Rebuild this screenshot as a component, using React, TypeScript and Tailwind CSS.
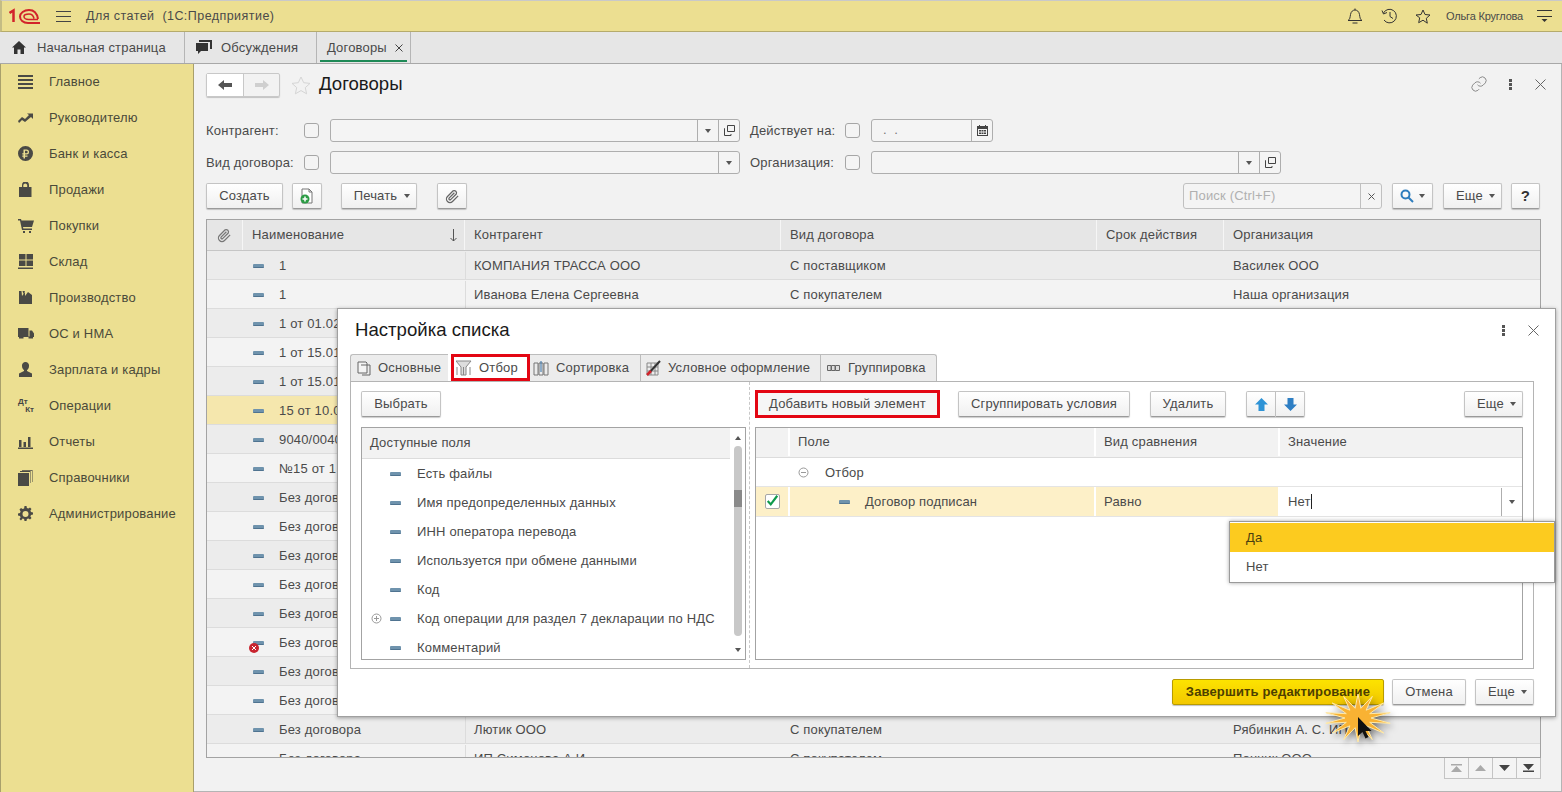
import { ReactNode } from 'react';

const GRID = 'grid grid-cols-[36px_222px_316px_316px_127px_315px]';

const sidebarItems: [string, ReactNode][] = [
  ['Главное', <path d="M0 1h15v2H0zM0 5h15v2H0zM0 9h15v2H0zM0 13h15v2H0z" />],
  ['Руководителю', <path d="M0 11l4-4 3 2 4-4-2-1.500h6V9l-2-2-6 5-3-2-3 3z" />],
  ['Банк и касса', <path fillRule="evenodd" d="M7.500 0a7.500 7.500 0 1 0 0 15 7.500 7.500 0 0 0 0-15zM5.500 3.500h3a2.500 2.500 0 0 1 0 5h-1.500v1h2.500v1.200H7v1.800H5.500v-1.800H4.300v-1.200h1.200v-1H4.300V7.200h1.200zM7 4.800v2.400h1.500a1.200 1.200 0 0 0 0-2.400z" />],
  ['Продажи', <path fillRule="evenodd" d="M1 5h3V3a3.500 3.500 0 0 1 7 0v2h2.500v10H1zM5.300 5h3.900V3a2 2 0 0 0-3.900 0z" />],
  ['Покупки', <path d="M0 1h3l.5 1.500H16L14 9H5l.3 1.500H14V12H4L2 2.500H0z M5 13h2v2H5z M11 13h2v2h-2z" />],
  ['Склад', <path d="M1 0h6.500v5.500H1zM8.500 0H15v5.500H8.500zM1 6.500h6.500v5.500H1zM8.500 6.500H15v5.500H8.500zM0 13.500h15V15H0z" />],
  ['Производство', <path d="M1 1h2.500l.5 5 3-4v4l3-4 4 3v9H1zM4.500 1H7L5.500 4z" />],
  ['ОС и НМА', <path d="M0 2h10.500v9H0zM11.500 4.500H14l2 3V11h-4.500zM1 10.500h4.500v2H1zM10.500 10.500h4.500v2h-4.500z" />],
  ['Зарплата и кадры', <path d="M7.500 0a3.500 3.500 0 0 1 3.500 4c0 2-1 3.500-2 4v1l5 2.500V15H1v-3.500L6 9V8C5 7.500 4 6 4 4a3.500 3.500 0 0 1 3.500-4z" />],
  ['Операции', <></>],
  ['Отчеты', <path d="M1 6h2.500v7H1zM5.500 8H8v5H5.500zM10 3h2.500v10H10zM0 13.500h15V15H0z" />],
  ['Справочники', <path d="M0 3h11v13H0zM2 1h10.500v12H12V2H2zM4 0h10.500v12H14V.800H4z" />],
  ['Администрирование', <path fillRule="evenodd" d="M6.500 0h2l.4 2 1.500.6L12 1.500l1.500 1.500-1.100 1.600.6 1.500 2 .4v2l-2 .4-.6 1.500 1.100 1.600-1.500 1.500-1.600-1.100-1.500.6-.4 2h-2l-.4-2-1.500-.6L3 14.500 1.500 13l1.100-1.600L2 9.900l-2-.4v-2l2-.4.6-1.500L1.500 3.500 3 2l1.600 1.100 1.500-.6zM7.500 5a3 3 0 1 0 0 6 3 3 0 0 0 0-6z" />],
];

// rows of the list behind the dialog
const rows = [
  ['1', 'КОМПАНИЯ ТРАССА ООО', 'С поставщиком', 'Василек ООО'],
  ['1', 'Иванова Елена Сергеевна', 'С покупателем', 'Наша организация'],
  ['1 от 01.02', '', '', ''],
  ['1 от 15.01', '', '', ''],
  ['1 от 15.01', '', '', ''],
  ['15 от 10.0', '', '', ''],
  ['9040/0040', '', '', ''],
  ['№15 от 1', '', '', ''],
  ['Без догов', '', '', ''],
  ['Без догов', '', '', ''],
  ['Без догов', '', '', ''],
  ['Без догов', '', '', ''],
  ['Без догов', '', '', ''],
  ['Без догов', '', '', ''],
  ['Без догов', '', '', ''],
  ['Без догов', '', '', ''],
  ['Без договора', 'Лютик ООО', 'С покупателем', 'Рябинкин А. С. ИП'],
  ['Без договора', 'ИП Симонова А И', 'С покупателем', 'Пончик ООО'],
];

const fields = [
  'Есть файлы',
  'Имя предопределенных данных',
  'ИНН оператора перевода',
  'Используется при обмене данными',
  'Код',
  'Код операции для раздел 7 декларации по НДС',
  'Комментарий',
];

// 14 point burst behind the mouse cursor
const burst = Array.from({ length: 28 }, (_, i) => {
  const a = (i / 28) * Math.PI * 2 - Math.PI / 2;
  const rx = i % 2 === 0 ? 33 : 13;
  const ry = i % 2 === 0 ? 24 : 10;
  return `${(34 + rx * Math.cos(a)).toFixed(1)},${(25 + ry * Math.sin(a)).toFixed(1)}`;
}).join(' ');

function Dash() {
  return <span className="block h-[4px] w-[11px] shrink-0 rounded-[1px] bg-[#6f93ad] border-b border-[#4f7390]" />;
}

function Caret({ className = '' }: { className?: string }) {
  return <span className={`inline-block w-0 h-0 border-x-[3px] border-x-transparent border-t-[4px] border-t-[#555] ${className}`} />;
}

function Btn({ children, className = '' }: { children: ReactNode; className?: string }) {
  return (
    <div className={`flex h-[26px] items-center justify-center rounded-[2px] border border-[#c4c4c4] border-b-[#9a9a9a] bg-gradient-to-b from-white to-[#f0f0f0] shadow-[0_1px_1px_rgba(0,0,0,0.2)] text-[#4a4a4a] ${className}`}>
      {children}
    </div>
  );
}

function Check() {
  return <span className="block h-[15px] w-[15px] shrink-0 rounded-[3px] border border-[#a6a6a6] bg-[#f4f4f4]" />;
}

function Field({ className = '', children }: { className?: string; children?: ReactNode }) {
  return <div className={`flex h-[23px] rounded-[3px] border border-[#aeaeae] bg-[#f4f4f4] ${className}`}>{children}</div>;
}

function OpenIcon() {
  return (
    <svg width="11" height="11" viewBox="0 0 11 11" fill="none" stroke="#444">
      <path d="M3.500.500h7v6h-7zM1 3.500H.500v7h6.500V9" />
    </svg>
  );
}

function Addon({ children }: { children: ReactNode }) {
  return <div className="flex w-[21px] shrink-0 items-center justify-center border-l border-[#aeaeae]">{children}</div>;
}

export default function App() {
  return (
    <div className="relative flex h-[792px] w-[1562px] flex-col overflow-hidden bg-[#f2f2f2] font-['Liberation_Sans',Arial,sans-serif] text-[13px] tracking-[0.17px] text-[#4a4a4a]">
      {/* top bar */}
      <header className="flex h-[32px] shrink-0 items-center border-b border-[#b5ab6c] border-t border-t-[#c9c9c9] border-l-2 border-l-[#c4bc84] bg-[#ecdf91] pl-[7px] pr-[10px]">
        <svg width="31" height="17" viewBox="0 0 31 17" fill="none" stroke="#d2232a" strokeWidth="2">
          <path d="M.500 5l4-2.500V14" strokeWidth="2.500" />
          <path d="M29 11C28 5 25 2 20 2c-5 0-9 3-9 6.500s3 6.500 8 6.500h12" />
          <path d="M25 10.500C24.500 8 23 6 20 6c-3 0-5 1-5 2.500s2 3 4.500 3H29" strokeWidth="1.600" />
        </svg>
        <svg className="ml-[16px]" width="15" height="11" viewBox="0 0 15 11" stroke="#444">
          <path d="M0 .500h15M0 5.500h15M0 10.500h15" />
        </svg>
        <span className="ml-[15px] text-[12.500px] tracking-[0.45px]">Для статей&nbsp; (1С:Предприятие)</span>
        <div className="ml-auto flex items-center">
          <svg width="16" height="17" viewBox="0 0 16 17" fill="none" stroke="#333">
            <path d="M1 12.500c2-1 2-3 2.500-6C4 3.500 6 2 8 2s4 1.500 4.500 4.500.5 5 2.500 6zM1 12.500h14M5.500 15h5" />
            <path d="M8 .500V2" />
          </svg>
          <svg className="ml-[18px]" width="17" height="16" viewBox="0 0 17 16" fill="none" stroke="#333">
            <path d="M2.500 5A6.800 6.800 0 1 1 3 12" />
            <path d="M1 2.500L2.500 6 6 4.500" />
            <path d="M9 4v4.500l3 2" />
          </svg>
          <svg className="ml-[17px]" width="16" height="15" viewBox="0 0 16 15" fill="none" stroke="#333">
            <path d="M8 1l2 4.500 5 .500-3.700 3.300 1 4.900L8 11.200 3.700 13.700l1-4.900L1 6l5-.500z" />
          </svg>
          <span className="ml-[15px] text-[11px] tracking-[-0.2px]">Ольга Круглова</span>
          <svg className="ml-[14px] shrink-0" width="15" height="12" viewBox="0 0 15 12" fill="#333" stroke="#333">
            <path d="M0 .500h15M0 6.500h15" />
            <path stroke="none" d="M4.500 9h6l-3 3z" />
          </svg>
        </div>
      </header>

      {/* tabs */}
      <nav className="flex h-[32px] shrink-0 border-b border-[#a8a8a8] bg-[#e6e6e6]">
        <div className="flex w-[185px] items-center border-r border-[#b5b5b5] pl-[12px]">
          <svg width="14" height="13" viewBox="0 0 14 13" fill="#333">
            <path d="M7 0l7 6.500h-2V13H8.500V8.500h-3V13H2V6.500H0z" />
          </svg>
          <span className="ml-[11px]">Начальная страница</span>
        </div>
        <div className="flex w-[132px] items-center border-r border-[#b5b5b5] pl-[10px]">
          <svg width="17" height="15" viewBox="0 0 17 15" fill="#333">
            <path d="M4 0h13v9h-2V2H4z" />
            <path d="M1 3h12v8H6l-3 3v-3H1z" />
          </svg>
          <span className="ml-[9px]">Обсуждения</span>
        </div>
        <div className="relative flex w-[94px] items-center border-r border-[#b5b5b5] pl-[10px]">
          <span>Договоры</span>
          <svg className="ml-[8px]" width="8" height="8" viewBox="0 0 8 8" stroke="#444">
            <path d="M.500.500l7 7M7.500.500l-7 7" />
          </svg>
          <span className="absolute bottom-[1px] left-[3px] right-[3px] h-[2px] bg-[#1e8a57]" />
        </div>
      </nav>

      <div className="flex min-h-0 flex-1">
        {/* sidebar */}
        <aside className="flex w-[194px] shrink-0 flex-col border-l border-r border-l-[#a9a06b] border-r-[#a9a06b] bg-[#ecdf91]">
          {sidebarItems.map(([label, icon]) => (
            <div key={label} className="flex h-[36px] items-center pl-[17px] text-[#4a4a3a]">
              {label === 'Операции' ? (
                <span className="relative block h-[16px] w-[16px] text-[8px] font-bold leading-none tracking-normal text-[#444]">
                  <span className="absolute left-0 top-0">Дт</span>
                  <span className="absolute bottom-0 right-0">Кт</span>
                </span>
              ) : (
                <svg width="16" height="16" viewBox="0 0 16 16" fill="#4a4a45">
                  {icon}
                </svg>
              )}
              <span className="ml-[15px]">{label}</span>
            </div>
          ))}
        </aside>

        {/* list form */}
        <main className="flex min-w-0 flex-1 flex-col border-b border-r border-[#b4b4b4] pl-[12px] pr-[20px]">
          <div className="flex h-[33px] shrink-0 items-end">
            <div className="flex h-[24px] w-[74px] rounded-[2px] border border-[#c8c8c8] shadow-[0_1px_1px_rgba(0,0,0,0.2)]">
              <div className="flex w-[37px] items-center justify-center border-r border-[#c8c8c8] bg-white">
                <svg width="14" height="10" viewBox="0 0 14 10" fill="#555">
                  <path d="M0 5l6-5v3h8v4H6v3z" />
                </svg>
              </div>
              <div className="flex flex-1 items-center justify-center">
                <svg width="14" height="10" viewBox="0 0 14 10" fill="#cfcfcf">
                  <path d="M14 5L8 0v3H0v4h8v3z" />
                </svg>
              </div>
            </div>
            <svg className="mb-[2px] ml-[11px]" width="20" height="19" viewBox="0 0 20 19" fill="none" stroke="#d5d5d5">
              <path d="M10 1l2.700 5.700 6.300.7-4.700 4.200 1.300 6.200-5.600-3.200-5.600 3.200 1.300-6.200L1 7.400l6.300-.7z" />
            </svg>
            <h1 className="mb-[1px] ml-[8px] text-[18.600px] font-normal leading-[24px] tracking-normal text-[#1a1a1a]">Договоры</h1>
            <div className="ml-auto mr-[-5px] mb-[4px] flex items-center">
              <svg width="18" height="18" viewBox="0 0 24 24" fill="none" stroke="#888" strokeWidth="1.300">
                <path d="M10 13a5 5 0 0 0 7.500.500l3-3a5 5 0 0 0-7-7l-1.700 1.700" />
                <path d="M14 11a5 5 0 0 0-7.500-.500l-3 3a5 5 0 0 0 7 7l1.700-1.700" />
              </svg>
              <svg className="ml-[21px]" width="3" height="11" viewBox="0 0 3 11" fill="#555">
                <path d="M0 0h3v3H0zM0 4h3v3H0zM0 8h3v3H0z" />
              </svg>
              <svg className="ml-[23px]" width="11" height="11" viewBox="0 0 11 11" stroke="#666">
                <path d="M.500.500l10 10M10.500.500l-10 10" />
              </svg>
            </div>
          </div>

          <div className="mt-[22px] flex h-[23px] shrink-0 items-center">
            <span className="w-[98px]">Контрагент:</span>
            <Check />
            <Field className="ml-[11px] w-[410px]">
              <div className="flex-1" />
              <Addon><Caret /></Addon>
              <Addon><OpenIcon /></Addon>
            </Field>
            <span className="ml-[10px] w-[95px]">Действует на:</span>
            <Check />
            <Field className="ml-[11px] w-[122px]">
              <span className="flex-1 pl-[11px] text-[#777]">. &nbsp;.</span>
              <Addon>
                <svg width="11" height="11" viewBox="0 0 11 11" fill="#444">
                  <path d="M0 1h2V0h1v1h5V0h1v1h2v10H0zM1 4v6h9V4z" />
                  <path d="M2 5h2v1.500H2zM4.500 5h2v1.500h-2zM7 5h2v1.500H7zM2 7.500h2V9H2zM4.500 7.500h2V9h-2zM7 7.500h2V9H7z" />
                </svg>
              </Addon>
            </Field>
          </div>

          <div className="mt-[9px] flex h-[23px] shrink-0 items-center">
            <span className="w-[98px]">Вид договора:</span>
            <Check />
            <Field className="ml-[11px] w-[410px]">
              <div className="flex-1" />
              <Addon><Caret /></Addon>
            </Field>
            <span className="ml-[10px] w-[95px]">Организация:</span>
            <Check />
            <Field className="ml-[11px] w-[410px]">
              <div className="flex-1" />
              <Addon><Caret /></Addon>
              <Addon><OpenIcon /></Addon>
            </Field>
          </div>

          <div className="mr-[1px] mt-[9px] flex h-[26px] shrink-0 items-center">
            <Btn className="w-[77px]">Создать</Btn>
            <Btn className="ml-[9px] w-[30px]">
              <svg width="16" height="16" viewBox="0 0 16 16">
                <path d="M3 1h7l3 3v11H3z" fill="#fff" stroke="#777" />
                <path d="M10 1v3h3" fill="none" stroke="#777" />
                <circle cx="6" cy="11" r="4.500" fill="#2c9c45" />
                <path d="M6 8.500v5M3.500 11h5" stroke="#fff" strokeWidth="1.500" />
              </svg>
            </Btn>
            <Btn className="ml-[19px] w-[76px] pl-[6px]">Печать<Caret className="ml-[7px]" /></Btn>
            <Btn className="ml-[20px] w-[30px]">
              <svg width="15" height="15" viewBox="0 0 24 24" fill="none" stroke="#666" strokeWidth="2">
                <path d="M21 11l-9 9a5.500 5.500 0 0 1-8-8l9-9a3.700 3.700 0 0 1 5 5l-9 9a1.800 1.800 0 0 1-2.500-2.500l8.500-8.500" />
              </svg>
            </Btn>
            <div className="ml-auto flex h-[26px] w-[199px] rounded-[3px] border border-[#c0c0c0] bg-[#f4f4f4]">
              <span className="flex flex-1 items-center pl-[5px] text-[#b0b0b0]">Поиск (Ctrl+F)</span>
              <div className="flex w-[21px] items-center justify-center border-l border-[#c0c0c0]">
                <svg width="7" height="7" viewBox="0 0 7 7" stroke="#555">
                  <path d="M.500.500l6 6M6.500.500l-6 6" />
                </svg>
              </div>
            </div>
            <Btn className="ml-[10px] w-[41px]">
              <svg width="14" height="14" viewBox="0 0 14 14" fill="none" stroke="#2e7dbd" strokeWidth="2">
                <circle cx="5.500" cy="5.500" r="4" />
                <path d="M8.500 8.500l4.500 4.500" />
              </svg>
              <Caret className="ml-[5px]" />
            </Btn>
            <Btn className="ml-[10px] w-[59px] pl-[6px]">Еще<Caret className="ml-[6px]" /></Btn>
            <Btn className="ml-[9px] w-[29px] font-bold text-[15px] text-[#333]">?</Btn>
          </div>

          {/* contracts table */}
          <div className="mt-[10px] h-[539px] shrink-0 overflow-hidden border border-[#a3a3a3] bg-[#f2f2f2]">
            <div className={`${GRID} h-[31px] border-b border-[#c6c6c6] bg-[#e6e6e6]`}>
              <div className="flex items-center justify-center border-r border-[#f6f6f6]">
                <svg width="15" height="15" viewBox="0 0 24 24" fill="none" stroke="#777" strokeWidth="2">
                  <path d="M21 11l-9 9a5.500 5.500 0 0 1-8-8l9-9a3.700 3.700 0 0 1 5 5l-9 9a1.800 1.800 0 0 1-2.500-2.500l8.500-8.500" />
                </svg>
              </div>
              <div className="flex items-center justify-between border-r border-[#f6f6f6] pl-[9px] pr-[7px]">
                Наименование
                <svg width="7" height="13" viewBox="0 0 7 13" fill="none" stroke="#555">
                  <path d="M3.500 0v12M.500 9l3 3 3-3" />
                </svg>
              </div>
              <div className="flex items-center border-r border-[#f6f6f6] pl-[9px]">Контрагент</div>
              <div className="flex items-center border-r border-[#f6f6f6] pl-[9px]">Вид договора</div>
              <div className="flex items-center border-r border-[#f6f6f6] pl-[9px]">Срок действия</div>
              <div className="flex items-center pl-[9px]">Организация</div>
            </div>
            {rows.map((row, i) => (
              <div
                key={i}
                className={`${GRID} h-[29px] border-b border-[#dcdcdc] pt-[1px] ${i === 5 ? 'bg-[#f5e7ad]' : i % 2 === 0 ? 'bg-[#ececec]' : 'bg-[#f3f3f3]'}`}
              >
                <div />
                <div className="relative flex items-center pl-[10px]">
                  <Dash />
                  {i === 13 && (
                    <svg className="absolute left-[6px] top-[14px]" width="10" height="10" viewBox="0 0 10 10">
                      <circle cx="5" cy="5" r="5" fill="#c8242f" />
                      <path d="M3 3l4 4M7 3l-4 4" stroke="#fff" />
                    </svg>
                  )}
                  <span className="ml-[15px] whitespace-nowrap">{row[0]}</span>
                </div>
                <div className="flex items-center border-l border-[#dcdcdc] pl-[8px]">{row[1]}</div>
                <div className="flex items-center pl-[9px]">{row[2]}</div>
                <div />
                <div className="flex items-center pl-[9px]">{row[3]}</div>
              </div>
            ))}
          </div>

          <div className="flex justify-end">
            <div className="flex h-[21px] w-[97px] border border-t-0 border-[#c4c4c4] bg-[#f4f4f4]">
              {[
                <path d="M0 0h11v1.500H0zM5.500 2L11 8H0z" fill="#aaa" />,
                <path d="M5.500 1L11 7H0z" fill="#aaa" />,
                <path d="M5.500 7L0 1h11z" fill="#444" />,
                <path d="M5.500 6L0 0h11zM0 6.500h11V8H0z" fill="#444" />,
              ].map((p, i) => (
                <div key={i} className="flex flex-1 items-center justify-center border-r border-[#c4c4c4] last:border-r-0">
                  <svg width="11" height="8" viewBox="0 0 11 8">{p}</svg>
                </div>
              ))}
            </div>
          </div>
        </main>
      </div>

      {/* dialog */}
      <section className="absolute left-[337px] top-[308px] flex h-[409px] w-[1219px] flex-col border border-[#a0a0a0] bg-white pl-[12px] shadow-[0_1px_4px_rgba(0,0,0,0.35)]">
        <div className="flex h-[45px] shrink-0 items-center pb-[3px] pl-[5px]">
          <h2 className="text-[18.600px] font-normal tracking-normal text-[#1a1a1a]">Настройка списка</h2>
          <div className="ml-auto mr-[16px] flex items-center">
            <svg width="3" height="11" viewBox="0 0 3 11" fill="#555">
              <path d="M0 0h3v3H0zM0 4h3v3H0zM0 8h3v3H0z" />
            </svg>
            <svg className="ml-[23px]" width="11" height="11" viewBox="0 0 11 11" stroke="#666">
              <path d="M.500.500l10 10M10.500.500l-10 10" />
            </svg>
          </div>
        </div>

        <div className="flex h-[27px] shrink-0 items-stretch">
          <div className="flex w-[98px] items-center rounded-tl-[3px] border border-b-0 border-r-0 border-[#bcbcbc] bg-[#ececec] pl-[6px]">
            <svg width="15" height="15" viewBox="0 0 15 15" fill="none" stroke="#666">
              <path d="M1 1h8l1 1v10H1z" fill="#f4f4f4" />
              <path d="M4 4h9v10H5" />
            </svg>
            <span className="ml-[6px]">Основные</span>
          </div>
          <div className="ml-[3px] flex w-[79px] items-center border-[3px] border-[#e30613] bg-white pl-[2px]">
            <svg width="16" height="16" viewBox="0 0 16 16" fill="none" stroke="#888">
              <path d="M0 1h15l-5 6v8H5V7z" fill="#ddd" />
              <path d="M7.500 7v8M1 7v8M14 7v8" />
            </svg>
            <span className="ml-[7px]">Отбор</span>
          </div>
          <div className="flex w-[110px] items-center border-t border-[#bcbcbc] bg-[#ececec] pl-[3px]">
            <svg width="16" height="16" viewBox="0 0 16 16" fill="none" stroke="#777">
              <path d="M1 3h4v12H1zM6 3h4v12H6zM11 3h4v12h-4z" />
              <path d="M8 1v11" stroke="#2e6da4" />
            </svg>
            <span className="ml-[7px]">Сортировка</span>
          </div>
          <div className="flex w-[181px] items-center border border-b-0 border-[#bcbcbc] bg-[#ececec] pl-[5px]">
            <svg width="16" height="16" viewBox="0 0 16 16" fill="none" stroke="#888">
              <path d="M1 3h11v12H1zM1 7h11M1 11h11M5 3v12M9 3v12" />
              <path d="M2 14L14 1" stroke="#333" strokeWidth="2" />
              <path d="M1 15l4-4" stroke="#d2232a" strokeWidth="2.500" />
            </svg>
            <span className="ml-[6px]">Условное оформление</span>
          </div>
          <div className="flex w-[116px] items-center rounded-tr-[3px] border border-b-0 border-l-0 border-[#bcbcbc] bg-[#ececec] pl-[6px]">
            <svg width="13" height="6" viewBox="0 0 13 6" fill="#ddd" stroke="#666">
              <path d="M.500.500h3.500v5H.500zM4.500.500H8v5H4.500zM8.500.500h4v5h-4z" />
            </svg>
            <span className="ml-[8px]">Группировка</span>
          </div>
        </div>

        <div className="flex h-[288px] w-[1184px] shrink-0 border border-[#b4b4b4] pl-[10px] pt-[9px]">
          {/* available fields */}
          <div className="flex w-[385px] shrink-0 flex-col">
            <Btn className="w-[80px]">Выбрать</Btn>
            <div className="mt-[10px] flex h-[233px] border border-[#a3a3a3]">
              <div className="min-w-0 flex-1 overflow-hidden">
                <div className="flex h-[31px] items-center border-b border-[#dcdcdc] bg-[#f2f2f2] pl-[8px]">Доступные поля</div>
                {fields.map((f, i) => (
                  <div key={f} className="flex h-[29px] items-center pl-[28px]">
                    {i === 5 && (
                      <svg className="ml-[-19px] mr-[8px]" width="11" height="11" viewBox="0 0 11 11" fill="none" stroke="#999">
                        <circle cx="5.500" cy="5.500" r="4.500" />
                        <path d="M3 5.500h5M5.500 3v5" />
                      </svg>
                    )}
                    <Dash />
                    <span className="ml-[16px] whitespace-nowrap">{f}</span>
                  </div>
                ))}
              </div>
              <div className="flex w-[15px] shrink-0 flex-col items-center bg-white">
                <span className="mt-[8px] h-0 w-0 border-x-[3px] border-b-[4px] border-x-transparent border-b-[#555]" />
                <span className="relative mt-[6px] h-[190px] w-[8px] rounded-[4px] bg-[#c8c8c8]">
                  <span className="absolute left-0 top-[44px] h-[17px] w-[8px] bg-[#8a8a8a]" />
                </span>
                <Caret className="mt-[12px]" />
              </div>
            </div>
          </div>

          <div className="mx-[3px] mt-[-9px] w-[1px] shrink-0 border-l border-dashed border-[#c8c8c8]" />

          {/* filter conditions */}
          <div className="ml-[2px] mt-[-1px] flex w-[768px] shrink-0 flex-col">
            <div className="flex h-[28px] shrink-0 items-center">
              <div className="flex h-[28px] w-[185px] items-center justify-center border-[3px] border-[#e30613] bg-[#f6f6f6]">Добавить новый элемент</div>
              <Btn className="ml-[18px] w-[172px]">Сгруппировать условия</Btn>
              <Btn className="ml-[20px] w-[76px]">Удалить</Btn>
              <div className="ml-[20px] flex">
                <Btn className="w-[30px] rounded-r-none">
                  <svg width="13" height="13" viewBox="0 0 13 13" fill="#2e93d6">
                    <path d="M6.500 0L13 6.500H9.500V13h-6V6.500H0z" />
                  </svg>
                </Btn>
                <Btn className="w-[29px] rounded-l-none border-l-0">
                  <svg width="13" height="13" viewBox="0 0 13 13" fill="#2e7fc4">
                    <path d="M6.500 13L13 6.500H9.500V0h-6v6.500H0z" />
                  </svg>
                </Btn>
              </div>
              <Btn className="ml-auto w-[59px] pl-[6px]">Еще<Caret className="ml-[6px]" /></Btn>
            </div>
            <div className="mt-[9px] h-[233px] border border-[#a3a3a3]">
              <div className="grid h-[30px] grid-cols-[34px_306px_184px_1fr] border-b border-[#dcdcdc] bg-[#f2f2f2] pb-[1px]">
                <div className="border-r-2 border-white" />
                <div className="flex items-center border-r-2 border-white pl-[8px]">Поле</div>
                <div className="flex items-center border-r-2 border-white pl-[8px]">Вид сравнения</div>
                <div className="flex items-center pl-[8px]">Значение</div>
              </div>
              <div className="flex h-[29px] items-center border-b border-[#e4e4e4] pl-[42px] pt-[1px]">
                <svg width="11" height="11" viewBox="0 0 11 11" fill="none" stroke="#999">
                  <circle cx="5.500" cy="5.500" r="4.500" />
                  <path d="M3 5.500h5" />
                </svg>
                <span className="ml-[16px]">Отбор</span>
              </div>
              <div className="grid h-[30px] grid-cols-[34px_306px_184px_1fr] border-b border-[#e4e4e4]">
                <div className="flex items-center justify-center border-r-2 border-white bg-[#fdf0c8]">
                  <span className="flex h-[15px] w-[15px] items-center justify-center rounded-[2px] border border-[#a6a6a6] bg-white">
                    <svg width="15" height="13" viewBox="0 0 15 13" fill="none" stroke="#0f9a4b" strokeWidth="2.500" className="mt-[-3px]">
                      <path d="M2 7l3.500 4L13 1" />
                    </svg>
                  </span>
                </div>
                <div className="flex items-center border-r-2 border-white bg-[#fdf0c8] pl-[49px]">
                  <Dash />
                  <span className="ml-[15px]">Договор подписан</span>
                </div>
                <div className="flex items-center border-r-2 border-white bg-[#fdf0c8] pl-[8px]">Равно</div>
                <div className="flex items-center bg-white pl-[8px]">
                  <span className="border-r border-[#222] pr-0 leading-[15px]">Нет</span>
                  <div className="ml-auto flex h-[28px] w-[21px] items-center justify-center border-l border-[#aeaeae]">
                    <Caret />
                  </div>
                </div>
              </div>
            </div>
          </div>
        </div>

        <div className="flex w-[1184px] flex-1 items-start justify-end pt-[10px]">
          <div className="flex h-[26px] w-[212px] items-center justify-center rounded-[2px] border border-[#b89b00] bg-gradient-to-b from-[#fce300] to-[#f3c800] font-bold tracking-[0.15px] text-[#4d3f00] shadow-[0_1px_1px_rgba(0,0,0,0.25)]">
            Завершить редактирование
          </div>
          <Btn className="ml-[8px] w-[74px]">Отмена</Btn>
          <Btn className="ml-[9px] w-[59px] pl-[6px]">Еще<Caret className="ml-[6px]" /></Btn>
        </div>
      </section>

      {/* value dropdown */}
      <div className="absolute left-[1229px] top-[521px] w-[326px] border border-[#9a9a9a] bg-white py-[1px] shadow-[0_0_4px_rgba(0,0,0,0.35)]">
        <div className="flex h-[29px] items-center bg-[#fccb1f] pl-[16px] text-[#4a3f10]">Да</div>
        <div className="flex h-[29px] items-center pl-[16px]">Нет</div>
      </div>

      {/* click marker */}
      <svg className="absolute left-[1324px] top-[693px] drop-shadow-[2px_3px_3px_rgba(0,0,0,0.5)]" width="70" height="52" viewBox="0 0 70 52">
        <polygon points={burst} fill="#f9b233" stroke="#ffe9a8" strokeWidth="1" />
        <path d="M34 24v19l4.500-4 3 6.500 3-1.500-3-6h6z" fill="#111" />
      </svg>
    </div>
  );
}
